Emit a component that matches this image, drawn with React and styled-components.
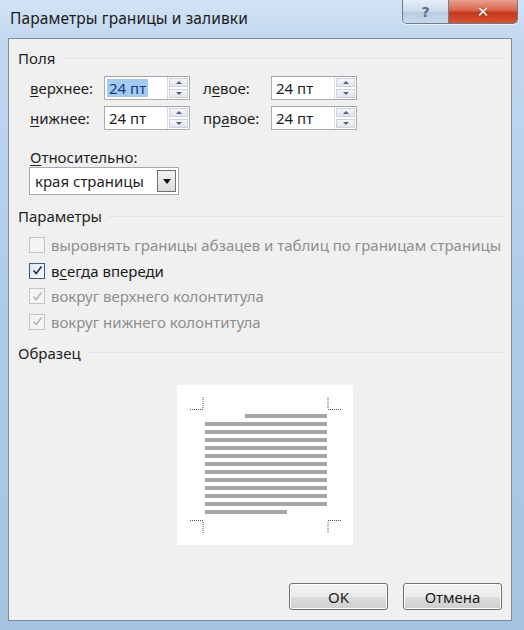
import React from "react";
import styled, { createGlobalStyle } from "styled-components";

const Global = createGlobalStyle`
  html, body { margin: 0; padding: 0; overflow: hidden; }
  body { font-family: "Noto Sans", "Open Sans", sans-serif; }
`;

const Frame = styled.div`
  width: 524px;
  height: 630px;
  box-sizing: border-box;
  display: flex;
  flex-direction: column;
  background: linear-gradient(to bottom, #d3e3f5 0px, #c2d8ef 40px, #aecbe8 300px, #a6c3e2 630px);
  padding: 0 12px 9px 8px;
  position: relative;
`;

const TitleBar = styled.div`
  height: 38px;
  display: flex;
  align-items: flex-start;
  position: relative;
`;

const Title = styled.div`
  font-size: 15.5px;
  color: #1b1b1b;
  margin-top: 7px;
  margin-left: 2px;
  letter-spacing: 0.1px;
`;

const Caption = styled.div`
  position: absolute;
  top: 0;
  right: -6px;
  display: flex;
  height: 23px;
  border: 1px solid #6b7d90;
  border-top: none;
  border-radius: 0 0 5px 5px;
  overflow: hidden;
  box-shadow: 0 1px 0 rgba(255,255,255,0.7);
`;

const CapBtn = styled.div`
  width: ${(p) => p.$w}px;
  display: flex;
  align-items: center;
  justify-content: center;
  font-family: "DejaVu Sans", sans-serif;
  font-weight: bold;
  font-size: ${(p) => (p.$close ? 15 : 14)}px;
  color: ${(p) => (p.$close ? "#fff" : "#5a6f86")};
  background: ${(p) =>
    p.$close
      ? "linear-gradient(to bottom, #eaa08f 0%, #d9654b 45%, #c5381a 55%, #d65134 100%)"
      : "linear-gradient(to bottom, #e6eef7 0%, #ccdaea 50%, #b9cbe0 51%, #c8d8ea 100%)"};
  border-left: ${(p) => (p.$close ? "1px solid #6b7d90" : "none")};
  text-shadow: ${(p) => (p.$close ? "0 0 2px #7a2010" : "none")};
`;

const Client = styled.div`
  flex: 1;
  background: #f0f0f0;
  border: 1px solid #7d8c9c;
  box-sizing: border-box;
  display: flex;
  flex-direction: column;
  padding: 0 8px 10px 9px;
  font-size: 15px;
  color: #1e1e1e;
`;

const GroupHead = styled.div`
  display: flex;
  align-items: center;
  height: 20px;
  margin-top: ${(p) => p.$mt}px;
  &::after {
    content: "";
    flex: 1;
    margin-left: 7px;
    border-top: 1px solid #dde3e8;
  }
`;

const Fields = styled.div`
  display: grid;
  grid-template-columns: 74px 86px 81px 86px;
  grid-auto-rows: 24px;
  row-gap: 6px;
  margin-top: 8px;
  margin-left: 12px;
  align-items: center;
`;

const Label = styled.span`
  white-space: nowrap;
  padding-left: ${(p) => p.$pl || 0}px;
`;

const U = styled.span`
  text-decoration: underline;
  text-underline-offset: 2px;
`;

const Spin = styled.div`
  display: flex;
  height: 24px;
  box-sizing: border-box;
  border: 1px solid #abadb3;
  border-top-color: #9fa2a9;
  background: #fff;
`;

const SpinText = styled.div`
  flex: 1;
  display: flex;
  align-items: center;
  padding-left: 2px;
`;

const Sel = styled.span`
  background: ${(p) => (p.$on ? "#a6cbf0" : "transparent")};
  color: ${(p) => (p.$on ? "#123a86" : "inherit")};
  padding: 0 2px;
  line-height: 18px;
`;

const SpinBtns = styled.div`
  width: 21px;
  display: flex;
  flex-direction: column;
  border-left: 1px solid #d6d9de;
`;

const SpinBtn = styled.div`
  flex: 1;
  display: flex;
  align-items: center;
  justify-content: center;
  background: linear-gradient(to bottom, #f3f5f8, #e2e6ec);
  border: 1px solid #cdd3da;
  margin: 1px;
  &::before {
    content: "";
    border-left: 3px solid transparent;
    border-right: 3px solid transparent;
    ${(p) => (p.$down ? "border-top: 3px solid #4d6185;" : "border-bottom: 3px solid #4d6185;")}
  }
`;

const RelLabel = styled.div`
  margin-top: 17px;
  margin-left: 12px;
  height: 20px;
  display: flex;
  align-items: center;
`;

const Select = styled.div`
  margin-top: 0;
  margin-left: 11px;
  width: 150px;
  height: 28px;
  box-sizing: border-box;
  border: 1px solid #a5a8ae;
  background: #fff;
  display: flex;
  align-items: center;
  padding: 0 2px 0 5px;
`;

const SelectText = styled.div`
  flex: 1;
`;

const DropBtn = styled.div`
  width: 19px;
  height: 22px;
  box-sizing: border-box;
  border: 1px solid #707070;
  background: linear-gradient(to bottom, #f2f2f2, #dcdcdc);
  display: flex;
  align-items: center;
  justify-content: center;
  &::before {
    content: "";
    border-left: 4px solid transparent;
    border-right: 4px solid transparent;
    border-top: 5px solid #111;
  }
`;

const Checks = styled.div`
  display: flex;
  flex-direction: column;
  margin-top: 6px;
  margin-left: 11px;
`;

const CheckRow = styled.div`
  display: flex;
  align-items: center;
  height: 25.7px;
  color: ${(p) => (p.$disabled ? "#8e8e8e" : "#1a1a1a")};
`;

const Box = styled.div`
  width: 16px;
  height: 16px;
  box-sizing: border-box;
  border: 1px solid ${(p) => (p.$disabled ? "#c4c4c4" : "#3d5a8a")};
  background: ${(p) => (p.$disabled ? "#f4f4f4" : "linear-gradient(135deg, #dfe6ef, #fbfcfd)")};
  margin-right: 6px;
  display: flex;
  align-items: center;
  justify-content: center;
`;

const Preview = styled.div`
  margin-top: 22px;
  margin-left: 159px;
  width: 176px;
  height: 160px;
  background: #fff;
  box-sizing: border-box;
  padding: 29px 26px 0 28px;
  display: flex;
  flex-direction: column;
  position: relative;
`;

const Line = styled.div`
  height: 4px;
  background: #a6a6a6;
  margin-bottom: 4px;
  width: ${(p) => p.$w}px;
  margin-left: ${(p) => p.$ml || 0}px;
`;

const Corner = styled.svg`
  position: absolute;
`;

const Buttons = styled.div`
  margin-top: auto;
  display: flex;
  justify-content: flex-end;
  gap: 15px;
  margin-right: 1px;
`;

const Btn = styled.div`
  width: 99px;
  height: 27px;
  box-sizing: border-box;
  border: 1px solid #707070;
  border-radius: 3px;
  background: linear-gradient(to bottom, #f2f2f2 0%, #ebebeb 50%, #dddddd 51%, #cfcfcf 100%);
  box-shadow: inset 0 0 0 1px #fcfcfc;
  display: flex;
  align-items: center;
  justify-content: center;
  color: #1a1a1a;
`;

const Check = ({ color }) => (
  <svg width="11" height="11" viewBox="0 0 11 11">
    <path d="M1.5 5.5 L4.2 8.6 L9.5 1.5" fill="none" stroke={color} strokeWidth="1.6" />
  </svg>
);

const CornerMark = ({ x, y, flipX, flipY }) => (
  <Corner
    width="14"
    height="14"
    viewBox="0 0 14 14"
    style={{ left: x, top: y, transform: `scale(${flipX ? -1 : 1}, ${flipY ? -1 : 1})` }}
  >
    <line x1="13" y1="0" x2="13" y2="12" stroke="#555" strokeWidth="1" strokeDasharray="1 1" />
    <line x1="0" y1="12.5" x2="13" y2="12.5" stroke="#555" strokeWidth="1" strokeDasharray="1 1" />
  </Corner>
);

const Field = ({ value, selected }) => (
  <Spin>
    <SpinText>
      <Sel $on={selected}>{value}</Sel>
    </SpinText>
    <SpinBtns>
      <SpinBtn />
      <SpinBtn $down />
    </SpinBtns>
  </Spin>
);

export default function App() {
  const lines = Array.from({ length: 11 });
  return (
    <>
      <Global />
      <Frame>
        <TitleBar>
          <Title>Параметры границы и заливки</Title>
          <Caption>
            <CapBtn $w={45}>?</CapBtn>
            <CapBtn $w={68} $close>✕</CapBtn>
          </Caption>
        </TitleBar>
        <Client>
          <GroupHead $mt={9}>Поля</GroupHead>
          <Fields>
            <Label><U>в</U>ерхнее:</Label>
            <Field value="24 пт" selected />
            <Label $pl={13}>л<U>е</U>вое:</Label>
            <Field value="24 пт" />
            <Label><U>н</U>ижнее:</Label>
            <Field value="24 пт" />
            <Label $pl={13}>пр<U>а</U>вое:</Label>
            <Field value="24 пт" />
          </Fields>
          <RelLabel><span><U>О</U>тносительно:</span></RelLabel>
          <Select>
            <SelectText>края страницы</SelectText>
            <DropBtn />
          </Select>
          <GroupHead $mt={11}>Параметры</GroupHead>
          <Checks>
            <CheckRow $disabled>
              <Box $disabled />
              выровнять границы абзацев и таблиц по границам страницы
            </CheckRow>
            <CheckRow>
              <Box><Check color="#1f2c52" /></Box>
              в<U>с</U>егда впереди
            </CheckRow>
            <CheckRow $disabled>
              <Box $disabled><Check color="#b4b4b4" /></Box>
              вокруг верхнего колонтитула
            </CheckRow>
            <CheckRow $disabled>
              <Box $disabled><Check color="#b4b4b4" /></Box>
              вокруг нижнего колонтитула
            </CheckRow>
          </Checks>
          <GroupHead $mt={8}>Образец</GroupHead>
          <Preview>
            <CornerMark x={13} y={12} />
            <CornerMark x={150} y={12} flipX />
            <CornerMark x={13} y={134} flipY />
            <CornerMark x={150} y={134} flipX flipY />
            <Line $w={82} $ml={40} />
            {lines.map((_, i) => (
              <Line key={i} $w={122} />
            ))}
            <Line $w={82} />
          </Preview>
          <Buttons>
            <Btn>OK</Btn>
            <Btn>Отмена</Btn>
          </Buttons>
        </Client>
      </Frame>
    </>
  );
}
